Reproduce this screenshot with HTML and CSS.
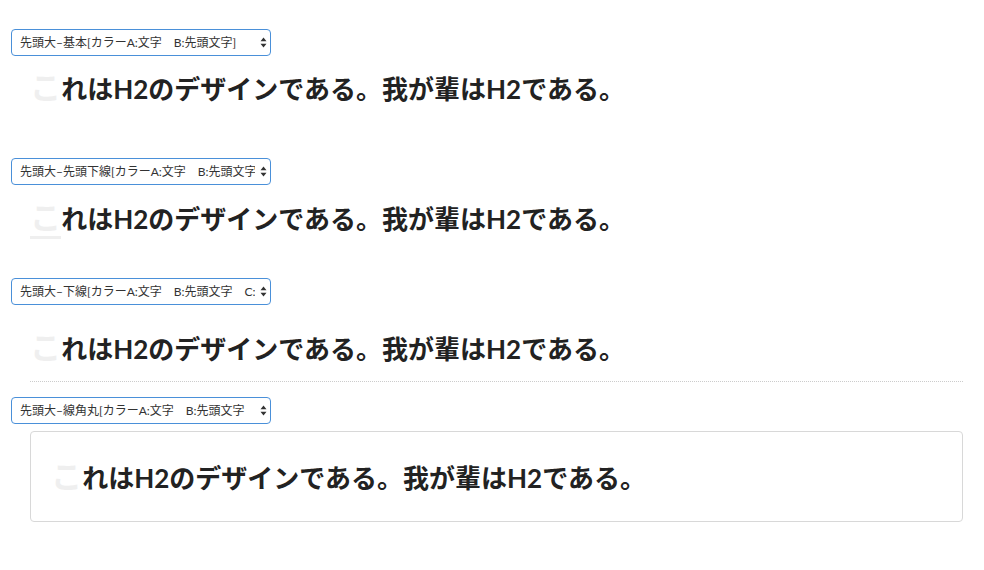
FILE: index.html
```html
<!DOCTYPE html>
<html lang="ja">
<head>
    <meta charset="UTF-8">
    <meta name="viewport" content="width=device-width, initial-scale=1.0">
    <title>H2 デザイン</title>
    <link rel="stylesheet" href="styles.css">
</head>
<body>
    <div class="page">
        <!-- 先頭大 基本 -->
        <div class="block">
            <div class="select-wrap">
                <select class="design-select">
                    <option>先頭大–基本[カラーA:文字　B:先頭文字]</option>
                </select>
                <svg class="select-arrow" width="7" height="11" viewBox="0 0 7 11"><path d="M3.5 0.5 L6.5 4.2 H0.5 Z M3.5 10.5 L6.5 6.8 H0.5 Z" fill="#333"/></svg>
            </div>
            <h2 class="heading heading-basic">これはH2のデザインである。我が輩はH2である。</h2>
        </div>

        <!-- 先頭大 先頭下線 -->
        <div class="block">
            <div class="select-wrap">
                <select class="design-select">
                    <option>先頭大–先頭下線[カラーA:文字　B:先頭文字]</option>
                </select>
                <svg class="select-arrow" width="7" height="11" viewBox="0 0 7 11"><path d="M3.5 0.5 L6.5 4.2 H0.5 Z M3.5 10.5 L6.5 6.8 H0.5 Z" fill="#333"/></svg>
            </div>
            <h2 class="heading heading-first-line">これはH2のデザインである。我が輩はH2である。</h2>
        </div>

        <!-- 先頭大 下線 -->
        <div class="block">
            <div class="select-wrap">
                <select class="design-select">
                    <option>先頭大–下線[カラーA:文字　B:先頭文字　C:下線]</option>
                </select>
                <svg class="select-arrow" width="7" height="11" viewBox="0 0 7 11"><path d="M3.5 0.5 L6.5 4.2 H0.5 Z M3.5 10.5 L6.5 6.8 H0.5 Z" fill="#333"/></svg>
            </div>
            <h2 class="heading heading-underline">これはH2のデザインである。我が輩はH2である。</h2>
        </div>

        <!-- 先頭大 線角丸 -->
        <div class="block">
            <div class="select-wrap">
                <select class="design-select">
                    <option>先頭大–線角丸[カラーA:文字　B:先頭文字　C:線]</option>
                </select>
                <svg class="select-arrow" width="7" height="11" viewBox="0 0 7 11"><path d="M3.5 0.5 L6.5 4.2 H0.5 Z M3.5 10.5 L6.5 6.8 H0.5 Z" fill="#333"/></svg>
            </div>
            <h2 class="heading heading-box">これはH2のデザインである。我が輩はH2である。</h2>
        </div>
    </div>
</body>
</html>
```

FILE: styles.css
```css
body {
    margin: 0;
    padding: 0;
    font-family: Lato, "Noto Sans CJK JP", sans-serif;
    background-color: #fff;
    color: #222;
}

.page {
    padding: 29px 21px 0 11px;
}

.select-wrap {
    position: relative;
    width: 260px;
}

.design-select {
    -webkit-appearance: none;
    appearance: none;
    width: 260px;
    height: 27px;
    padding: 0 15px 0 8px;
    border: 1px solid #4a90d9;
    border-radius: 4px;
    background: #fff;
    color: #333;
    font-family: Lato, "Noto Sans CJK JP", sans-serif;
    font-size: 12px;
    outline: none;
}

.select-arrow {
    position: absolute;
    right: 4px;
    top: 8px;
    pointer-events: none;
}

.heading {
    margin: 0 0 0 19px;
    font-size: 26px;
    font-weight: 700;
    line-height: 39px;
    color: #222;
}

.heading::first-letter {
    color: #efefef;
    font-size: 1.2em;
}

.heading-basic {
    margin-top: 12px;
    margin-bottom: 49px;
}

.heading-first-line {
    margin-top: 13px;
    margin-bottom: 39px;
}

.heading-first-line::first-letter {
    border-bottom: 3px solid #efefef;
}

.heading-underline {
    margin-top: 23px;
    padding-bottom: 12px;
    border-bottom: 1px dotted #ccc;
    margin-bottom: 15px;
}

.heading-box {
    margin-top: 7px;
    padding: 25px 20px 23px;
    border: 1px solid #d8d8d8;
    border-radius: 4px;
}
```
